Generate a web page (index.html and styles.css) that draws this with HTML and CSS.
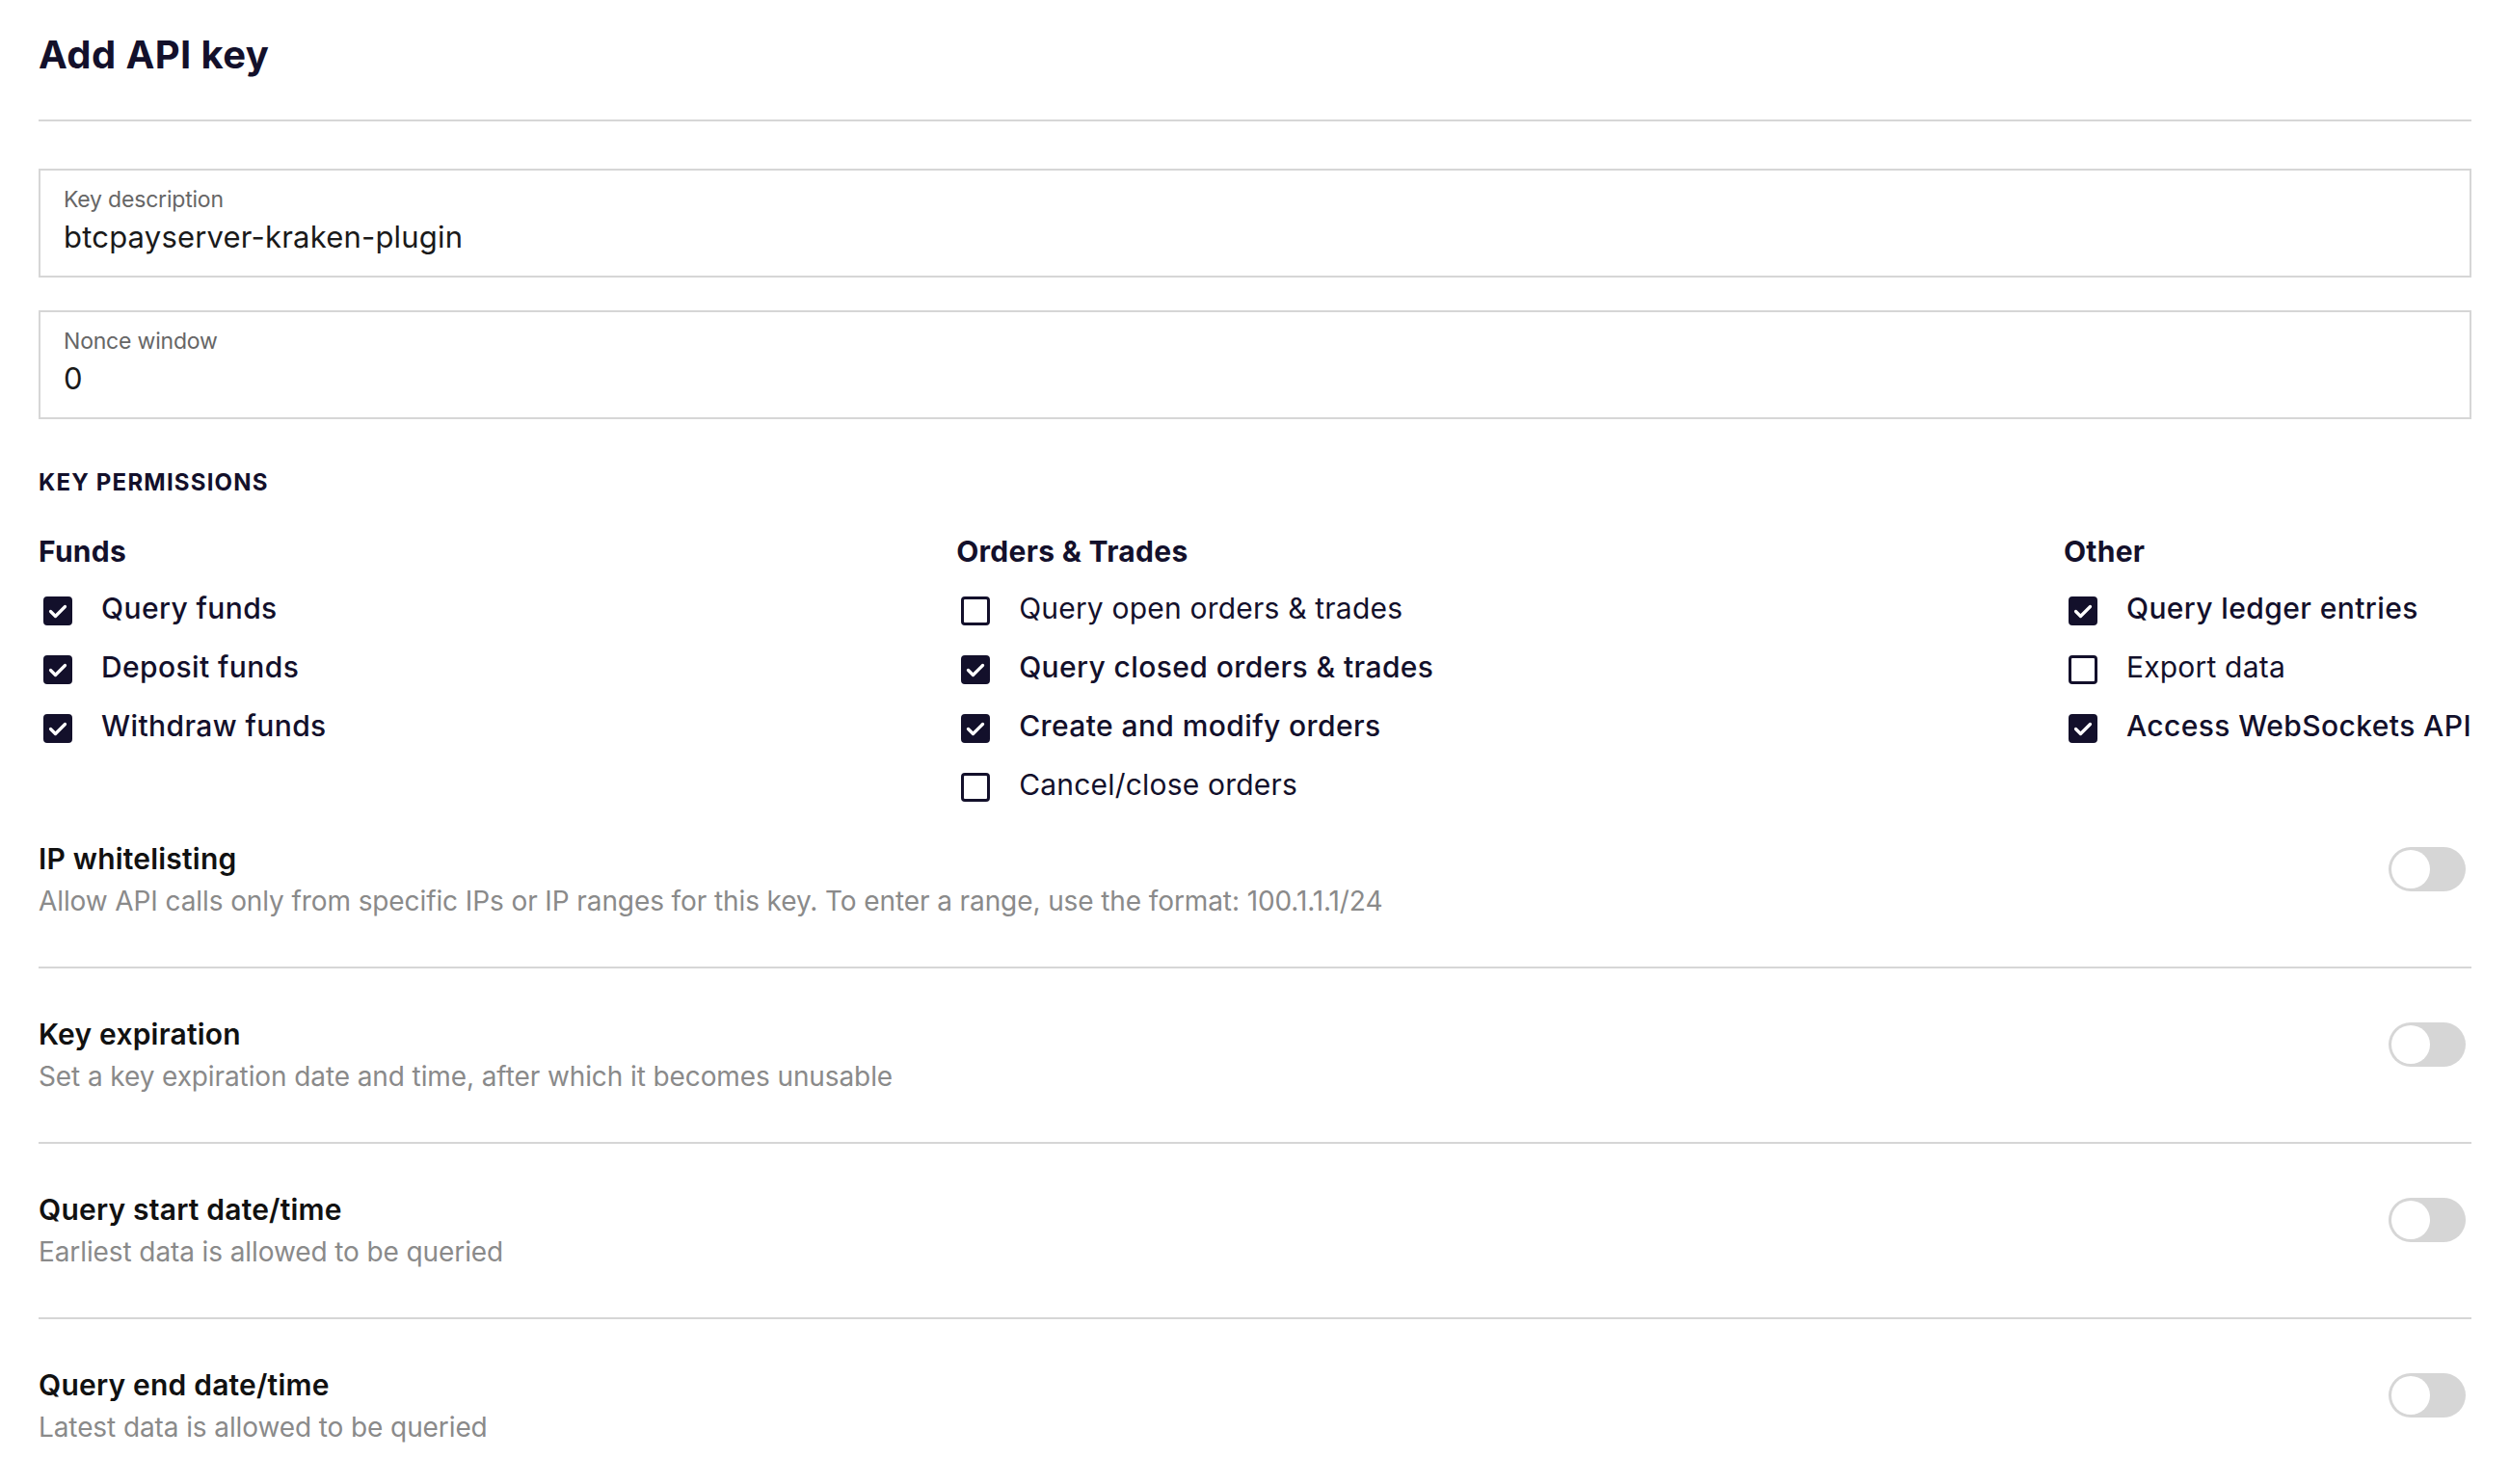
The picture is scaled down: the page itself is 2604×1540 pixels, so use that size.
FILE: index.html
```html
<!DOCTYPE html>
<html lang="en">
<head>
<meta charset="utf-8">
<title>Add API key</title>
<link rel="stylesheet" href="styles.css">
</head>
<body>
<div class="page">
  <header class="header">
    <h1 class="title">Add API key</h1>
  </header>

  <div class="fields">
    <label class="field">
      <span class="field-label">Key description</span>
      <span class="field-value">btcpayserver-kraken-plugin</span>
    </label>
    <label class="field">
      <span class="field-label">Nonce window</span>
      <span class="field-value">0</span>
    </label>
  </div>

  <h2 class="section-caps">KEY PERMISSIONS</h2>

  <div class="perm-columns">
    <div class="perm-col">
      <h3 class="perm-heading">Funds</h3>
      <ul class="perm-list">
        <li class="perm-item checked"><span class="box"><svg viewBox="0 0 30 30"><path d="M7.5 15.5 L12.5 20.5 L22.5 10.5"/></svg></span><span class="perm-text">Query funds</span></li>
        <li class="perm-item checked"><span class="box"><svg viewBox="0 0 30 30"><path d="M7.5 15.5 L12.5 20.5 L22.5 10.5"/></svg></span><span class="perm-text">Deposit funds</span></li>
        <li class="perm-item checked"><span class="box"><svg viewBox="0 0 30 30"><path d="M7.5 15.5 L12.5 20.5 L22.5 10.5"/></svg></span><span class="perm-text">Withdraw funds</span></li>
      </ul>
    </div>
    <div class="perm-col">
      <h3 class="perm-heading">Orders &amp; Trades</h3>
      <ul class="perm-list">
        <li class="perm-item"><span class="box"></span><span class="perm-text">Query open orders &amp; trades</span></li>
        <li class="perm-item checked"><span class="box"><svg viewBox="0 0 30 30"><path d="M7.5 15.5 L12.5 20.5 L22.5 10.5"/></svg></span><span class="perm-text">Query closed orders &amp; trades</span></li>
        <li class="perm-item checked"><span class="box"><svg viewBox="0 0 30 30"><path d="M7.5 15.5 L12.5 20.5 L22.5 10.5"/></svg></span><span class="perm-text">Create and modify orders</span></li>
        <li class="perm-item"><span class="box"></span><span class="perm-text">Cancel/close orders</span></li>
      </ul>
    </div>
    <div class="perm-col">
      <h3 class="perm-heading">Other</h3>
      <ul class="perm-list">
        <li class="perm-item checked"><span class="box"><svg viewBox="0 0 30 30"><path d="M7.5 15.5 L12.5 20.5 L22.5 10.5"/></svg></span><span class="perm-text">Query ledger entries</span></li>
        <li class="perm-item"><span class="box"></span><span class="perm-text">Export data</span></li>
        <li class="perm-item checked"><span class="box"><svg viewBox="0 0 30 30"><path d="M7.5 15.5 L12.5 20.5 L22.5 10.5"/></svg></span><span class="perm-text">Access WebSockets API</span></li>
      </ul>
    </div>
  </div>

  <div class="toggles">
    <div class="toggle-row">
      <div class="toggle-text">
        <div class="toggle-title">IP whitelisting</div>
        <div class="toggle-desc">Allow API calls only from specific IPs or IP ranges for this key. To enter a range, use the format: 100.1.1.1/24</div>
      </div>
      <span class="switch"><span class="knob"></span></span>
    </div>
    <div class="toggle-row">
      <div class="toggle-text">
        <div class="toggle-title">Key expiration</div>
        <div class="toggle-desc">Set a key expiration date and time, after which it becomes unusable</div>
      </div>
      <span class="switch"><span class="knob"></span></span>
    </div>
    <div class="toggle-row">
      <div class="toggle-text">
        <div class="toggle-title">Query start date/time</div>
        <div class="toggle-desc">Earliest data is allowed to be queried</div>
      </div>
      <span class="switch"><span class="knob"></span></span>
    </div>
    <div class="toggle-row">
      <div class="toggle-text">
        <div class="toggle-title">Query end date/time</div>
        <div class="toggle-desc">Latest data is allowed to be queried</div>
      </div>
      <span class="switch"><span class="knob"></span></span>
    </div>
  </div>
</div>
</body>
</html>
```

FILE: styles.css
```css
* { box-sizing: border-box; }

html, body {
  margin: 0;
  padding: 0;
  background: #ffffff;
}

body {
  font-family: "Inter", "Noto Sans", "Liberation Sans", sans-serif;
  color: #13102b;
}

.page {
  padding: 0 40px;
}

.header {
  padding: 33px 0 43px;
  border-bottom: 2px solid #d6d6d6;
}

.title {
  margin: 0;
  font-size: 40px;
  line-height: 48px;
  font-weight: 700;
  color: #13102b;
  letter-spacing: 0.4px;
}

.fields {
  display: flex;
  flex-direction: column;
  gap: 34px;
  margin-top: 49px;
}

.field {
  display: flex;
  flex-direction: column;
  gap: 7px;
  border: 2px solid #d6d6d6;
  padding: 16px 24px 22px;
}

.field-label {
  font-size: 23px;
  line-height: 28px;
  color: #666666;
  letter-spacing: -0.2px;
}

.field-value {
  font-size: 31px;
  line-height: 36px;
  color: #1a1a1a;
  letter-spacing: 0.2px;
}

.section-caps {
  margin: 52px 0 0;
  font-size: 24px;
  line-height: 28px;
  font-weight: 700;
  color: #13102b;
  letter-spacing: 1.2px;
}

.perm-columns {
  display: flex;
  justify-content: space-between;
  margin-top: 39px;
}

.perm-heading {
  margin: 0;
  font-size: 30px;
  line-height: 36px;
  font-weight: 700;
  color: #13102b;
  letter-spacing: 0.3px;
}

.perm-list {
  list-style: none;
  margin: 23px 0 0;
  padding: 0;
  display: flex;
  flex-direction: column;
  gap: 24px;
}

.perm-item {
  display: flex;
  align-items: center;
  gap: 30px;
  height: 37px;
}

.box {
  width: 30px;
  height: 30px;
  margin-left: 5px;
  border: 3px solid #13102b;
  border-radius: 4px;
  flex: none;
  display: flex;
  align-items: center;
  justify-content: center;
  margin-top: 4px;
}

.checked .box {
  background: #13102b;
}

.box svg {
  width: 30px;
  height: 30px;
  flex: none;
}

.box path {
  fill: none;
  stroke: #ffffff;
  stroke-width: 3.2;
  stroke-linecap: round;
  stroke-linejoin: round;
}

.perm-text {
  font-size: 30px;
  line-height: 37px;
  font-weight: 400;
  color: #13102b;
  letter-spacing: 0.2px;
}

.checked .perm-text {
  font-weight: 500;
  letter-spacing: 0.4px;
}

.toggle-row {
  display: flex;
  justify-content: space-between;
  align-items: flex-start;
  padding: 48px 0 48px;
  border-bottom: 2px solid #d6d6d6;
}

.toggle-row:first-child {
  padding-top: 38px;
}

.toggle-row:last-child {
  border-bottom: none;
}

.toggle-title {
  font-size: 30px;
  line-height: 40px;
  font-weight: 600;
  color: #111111;
  letter-spacing: 0.2px;
}

.toggle-desc {
  margin-top: 4px;
  font-size: 28px;
  line-height: 40px;
  color: #8a8a8a;
  letter-spacing: -0.1px;
}

.switch {
  width: 80px;
  height: 46px;
  border-radius: 23px;
  background: #d6d6d6;
  margin: 8px 6px 0 0;
  padding: 3px;
  display: flex;
  flex: none;
}

.knob {
  width: 40px;
  height: 40px;
  border-radius: 50%;
  background: #ffffff;
}
```
